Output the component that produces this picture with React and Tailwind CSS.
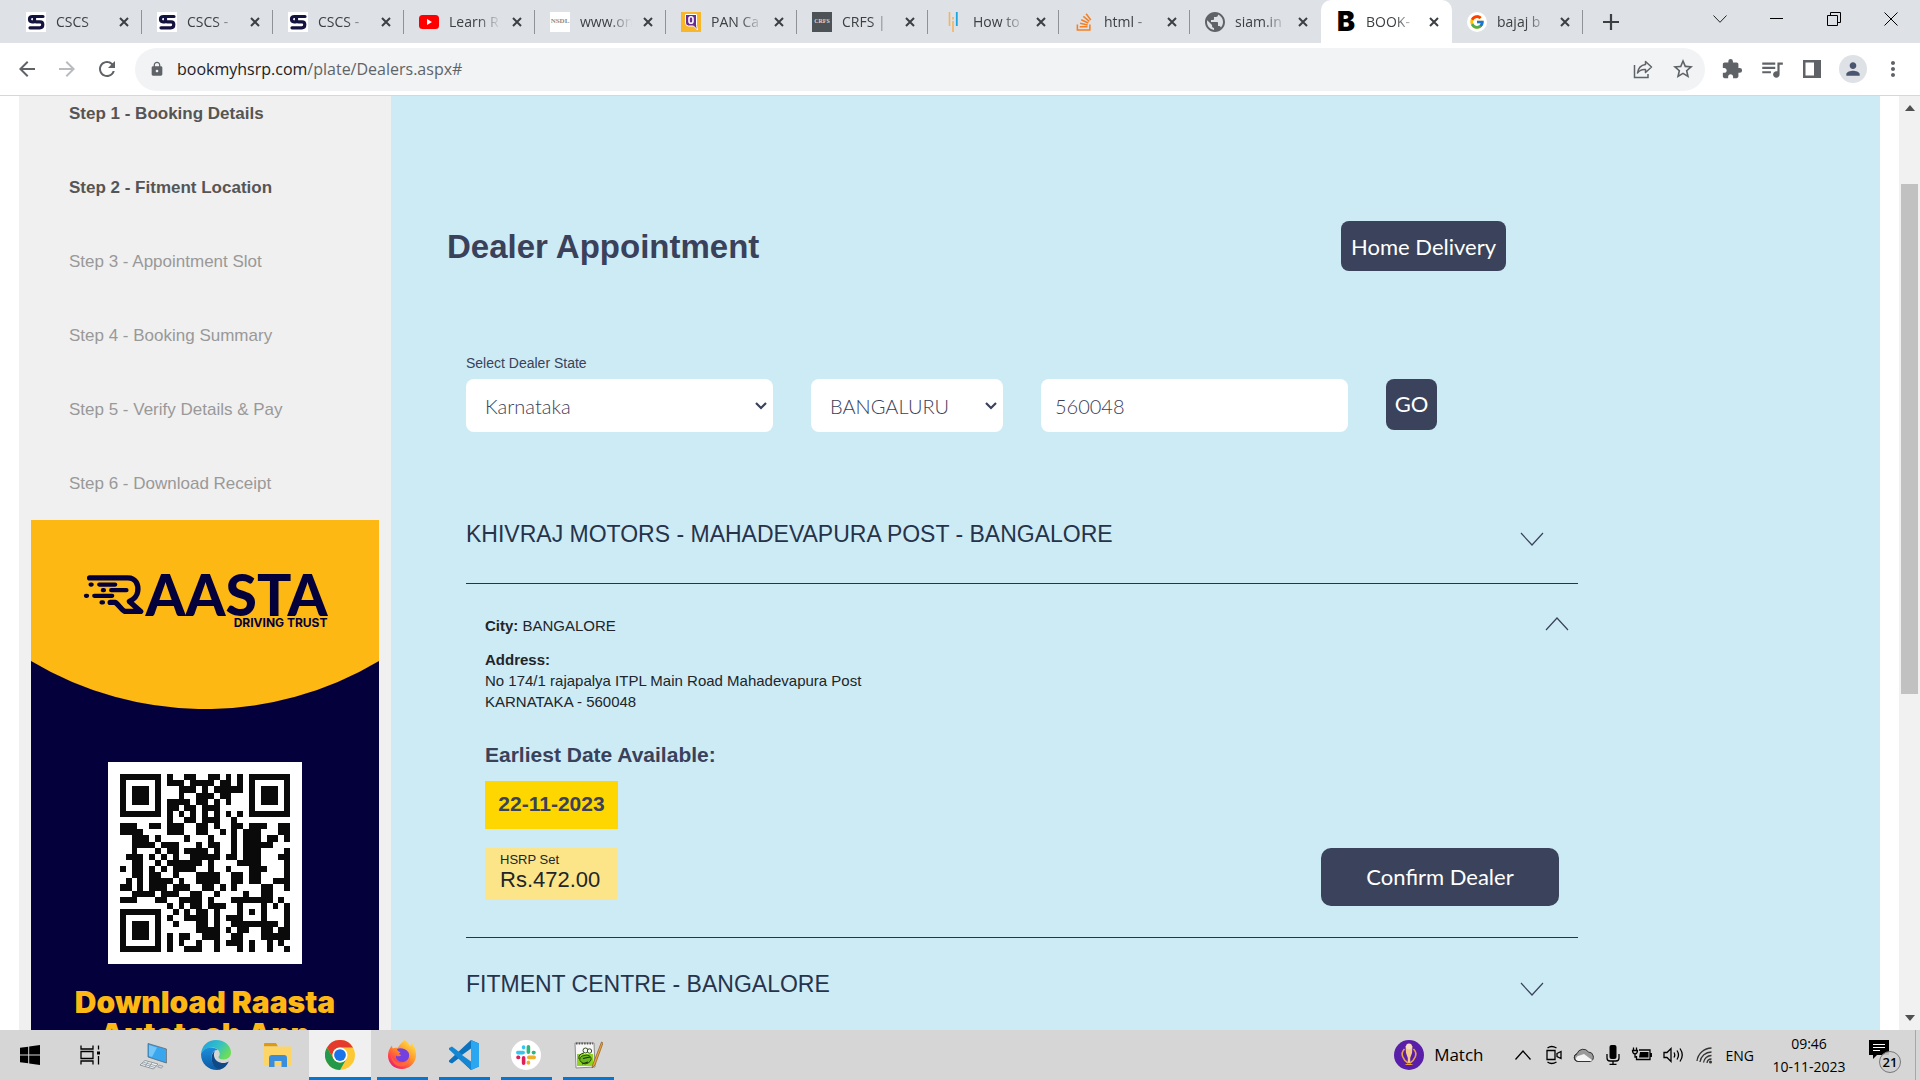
import React from "react";
import {
  MdArrowBack,
  MdArrowForward,
  MdRefresh,
  MdLock,
  MdStarBorder,
  MdExtension,
  MdQueueMusic,
  MdPerson,
  MdMoreVert,
  MdPublic,
} from "react-icons/md";
import { FcGoogle } from "react-icons/fc";
import { FaStackOverflow } from "react-icons/fa";

/* ---------- favicons ---------- */

const CscsIcon = () => (
  <svg viewBox="0 0 20 20" className="size-5">
    <rect width="20" height="20" fill="#fff" />
    <path
      d="M16.500 4.500H6.500Q3.500 4.500 3.500 7Q3.500 9.800 6 9.800H8M17 4.500H9.500Q8.500 4.500 8.500 6V8Q8.500 9.800 10.500 9.800H14Q16.800 9.800 16.800 12.500Q16.800 15.800 13.800 15.800H4"
      fill="none"
      stroke="#14123f"
      strokeWidth="3.200"
      strokeLinecap="round"
    />
  </svg>
);

const YoutubeIcon = () => (
  <svg viewBox="0 0 20 20" className="size-5">
    <rect y="3" width="20" height="14" rx="3.500" fill="#f00" />
    <path d="M8 7v6l5-3z" fill="#fff" />
  </svg>
);

const NsdlIcon = () => (
  <span className="flex size-5 items-center justify-center overflow-hidden bg-white font-['Liberation_Serif',serif] text-[7px] font-bold text-[#8a8a8a]">
    NSDL
  </span>
);

const QuintIcon = () => (
  <svg viewBox="0 0 20 20" className="size-5">
    <rect width="20" height="20" fill="#f8b62b" />
    <path d="M4.500 2.500h11v11l1 4.500-4-4h-5q-3 0-3-3z" fill="#6a2c91" stroke="#fff" strokeWidth="1" />
    <rect x="8" y="4.800" width="4" height="6.500" rx="2" fill="#6a2c91" stroke="#fff" strokeWidth="1.600" />
  </svg>
);

const CrfsIcon = () => (
  <span className="flex size-5 items-center justify-center overflow-hidden bg-[#4d5257] font-['Liberation_Serif',serif] text-[6px] font-bold text-[#d7d7d7]">
    CRFS
  </span>
);

const BarsIcon = () => (
  <svg viewBox="0 0 20 20" className="size-5">
    <path d="M6.500 0v14M10 9v11" stroke="#f5b35c" strokeWidth="1.600" />
    <path d="M10 5v2.500" stroke="#f5b35c" strokeWidth="1.600" />
    <path d="M13.800 0v14" stroke="#1ca6dc" strokeWidth="1.800" />
  </svg>
);

const BookIcon = () => (
  <span className="flex size-5 items-center justify-center font-['Inter',sans-serif] text-[27px] leading-5 font-black text-black">
    B
  </span>
);

const GoogleIcon = () => (
  <span className="flex size-5 items-center justify-center rounded-full bg-white">
    <FcGoogle className="size-4" />
  </span>
);

const CloseIcon = () => (
  <svg viewBox="0 0 16 16" className="size-4">
    <path d="M4 4l8 8M12 4l-8 8" stroke="#3c4043" strokeWidth="2" />
  </svg>
);

const TABS = [
  { title: "CSCS", icon: <CscsIcon /> },
  { title: "CSCS -", icon: <CscsIcon /> },
  { title: "CSCS -", icon: <CscsIcon /> },
  { title: "Learn R", icon: <YoutubeIcon /> },
  { title: "www.on", icon: <NsdlIcon /> },
  { title: "PAN Ca", icon: <QuintIcon /> },
  { title: "CRFS |", icon: <CrfsIcon /> },
  { title: "How to", icon: <BarsIcon /> },
  { title: "html -", icon: <FaStackOverflow className="size-5 text-[#f48024]" /> },
  { title: "siam.in", icon: <MdPublic className="size-6 -mx-0.5 text-[#5f6368]" />, beforeActive: true },
  { title: "BOOK-", icon: <BookIcon />, active: true },
  { title: "bajaj b", icon: <GoogleIcon /> },
];

function Tab({ tab }) {
  return (
    <div
      className={
        "flex w-[131px] min-w-0 items-center pr-2.5 pl-[15px] " +
        (tab.active ? "rounded-t-[10px] bg-white" : "")
      }
    >
      <span className="mr-2.5 flex size-5 shrink-0 items-center justify-center">{tab.icon}</span>
      <span className="mr-2 min-w-0 flex-1 overflow-hidden text-[14px] leading-5 whitespace-nowrap text-[#3c4043] [mask-image:linear-gradient(to_right,black_55%,transparent)]">
        {tab.title}
      </span>
      <button aria-label={"Close " + tab.title} className="shrink-0">
        <CloseIcon />
      </button>
      {!tab.active && !tab.beforeActive && (
        <span className="-mr-2.5 ml-[9px] h-6 w-px shrink-0 bg-[#8f9398]" />
      )}
    </div>
  );
}

function TabStrip() {
  return (
    <header className="flex h-[43px] shrink-0 bg-[#dee1e6] pr-px">
      <div className="flex min-w-0 pl-[11px]">
        {TABS.map((tab, i) => (
          <Tab key={i} tab={tab} />
        ))}
      </div>
      <button aria-label="New tab" className="px-5">
        <svg viewBox="0 0 16 16" className="size-4">
          <path d="M8 0v16M0 8h16" stroke="#3c4043" strokeWidth="2.200" />
        </svg>
      </button>
      <div className="mb-1.5 ml-auto flex">
        <button aria-label="Search tabs" className="flex w-[57px] items-center justify-center">
          <svg viewBox="0 0 14 8" className="h-2 w-3.5" fill="none" stroke="#222">
            <path d="M.5.5 7 7.300 13.500.5" />
          </svg>
        </button>
        <button aria-label="Minimize" className="flex w-[57px] items-center justify-center">
          <span className="h-px w-[13px] bg-black" />
        </button>
        <button aria-label="Restore" className="flex w-[57px] items-center justify-center">
          <svg viewBox="0 0 14 14" className="size-3.5" fill="none" stroke="#000">
            <path d="M.5 3.500h10v10H.5zM3.500 3V.5h10v10H11" />
          </svg>
        </button>
        <button aria-label="Close window" className="flex w-[57px] items-center justify-center">
          <svg viewBox="0 0 14 14" className="size-3.5" fill="none" stroke="#000">
            <path d="M.5.5l13 13M13.500.5l-13 13" />
          </svg>
        </button>
      </div>
    </header>
  );
}

function Toolbar() {
  return (
    <nav className="flex h-[53px] shrink-0 items-center border-b border-[#d5d7da] bg-white pr-[17px] text-[#5f6368]">
      <div className="flex w-[135px] shrink-0 items-center gap-4 pl-[15px]">
        <button aria-label="Back">
          <MdArrowBack className="size-6" />
        </button>
        <button aria-label="Forward" className="text-[#b9bbbe]">
          <MdArrowForward className="size-6" />
        </button>
        <button aria-label="Reload">
          <MdRefresh className="size-6" />
        </button>
      </div>
      <div className="flex h-[43px] min-w-0 flex-1 items-center rounded-full bg-[#f1f3f4] pr-2.5 pl-3.5">
        <MdLock className="size-4" />
        <p className="ml-3 flex-1 truncate text-[16px] leading-6">
          <span className="text-[#202124]">bookmyhsrp.com</span>
          <span>/plate/Dealers.aspx#</span>
        </p>
        <button aria-label="Share" className="mr-[18px]">
          <svg viewBox="0 0 20 20" className="size-5" fill="none" stroke="#5f6368" strokeWidth="1.500">
            <path d="M1.500 6v12.500H15V15" />
            <path d="M12.500 2.500 18.500 8l-6 5.500V10.500Q7.500 10 4.500 14Q5.500 6.500 12.500 5.500z" strokeLinejoin="round" />
          </svg>
        </button>
        <button aria-label="Bookmark">
          <MdStarBorder className="size-6" />
        </button>
      </div>
      <div className="ml-4 flex items-center gap-4">
        <button aria-label="Extensions">
          <MdExtension className="size-[22px]" />
        </button>
        <button aria-label="Media">
          <MdQueueMusic className="size-[26px]" />
        </button>
        <button aria-label="Side panel" className="px-0.5">
          <svg viewBox="0 0 18 18" className="size-[18px]">
            <path d="M0 0h18v18H0zM2.500 2.500v13h8.500v-13z" fill="#5f6368" fillRule="evenodd" />
          </svg>
        </button>
        <button aria-label="Profile" className="flex size-7 items-center justify-center rounded-full bg-[#dee1e6]">
          <MdPerson className="size-5 text-[#4a5670]" />
        </button>
        <button aria-label="Menu" className="flex w-5 justify-center">
          <MdMoreVert className="size-6 shrink-0" />
        </button>
      </div>
    </nav>
  );
}

/* ---------- sidebar ---------- */

const STEPS = [
  { label: "Step 1 - Booking Details", done: true },
  { label: "Step 2 - Fitment Location", done: true },
  { label: "Step 3 - Appointment Slot" },
  { label: "Step 4 - Booking Summary" },
  { label: "Step 5 - Verify Details & Pay" },
  { label: "Step 6 - Download Receipt" },
];

const QR = [
  "#######.#..##..##.#.#.#######",
  "#.....#.###.####.##.#.#.....#",
  "#.###.#...###.#.#####.#.###.#",
  "#.###.#...#..###.##...#.###.#",
  "#.###.#.####.##.#.#...#.###.#",
  "#.....#.##.##.###.....#.....#",
  "#######.#.#.#.#.#.#.#.#######",
  "........#..##.###..#.........",
  "###..##.###..##.#..##.###..##",
  "####....###..##..#.#.###...##",
  "..###.#....#...#...#.###.##.#",
  "..####.###...#.##..#.#####...",
  "..#...#.##.####.#..#.###....#",
  ".###.#.#.#..#####.##.###...##",
  "..##..#.######.#....####....#",
  "#.##.#.#.####..#..#...###...#",
  "..##.##..#...####..##.##....#",
  ".#.#.####.#..####..##.##..###",
  "##.#.###.###..##.#.#....##..#",
  "..####.###..##..#....#..##...",
  "###...##..####.#...#######.#.",
  "........#.#.##.###..#...#.#.#",
  "#######..#.#.##.#...#.#.#...#",
  "#.....#.#..####.#.###...#...#",
  "#.###.#..#...##.#..########.#",
  "#.###.#......####.#.##..##.##",
  "#.###.#.#.##..###..##...#####",
  "#.....#.#.#..#..#.###.#..#.#.",
  "#######.#..###..#...#.#..#..#",
];

const QrCode = () => (
  <svg
    viewBox="-2 -2 33 33"
    preserveAspectRatio="none"
    shapeRendering="crispEdges"
    className="h-[202px] w-[194px] bg-white"
    role="img"
    aria-label="QR code"
  >
    {QR.map((row, y) =>
      [...row].map((c, x) => (c === "#" ? <rect key={x + "-" + y} x={x} y={y} width="1" height="1" fill="#0a0a0a" /> : null))
    )}
  </svg>
);

const RaastaMark = () => (
  <svg viewBox="0 0 190 122" className="h-[41px] w-[63px]" fill="none" stroke="#04003c" strokeLinecap="round" strokeLinejoin="round">
    <path d="M20 11H135C160 11 168 32 165 52C163 68 152 76 140 82L174 112H126C114 106 108 92 98 85H82" strokeWidth="16" />
    <path d="M23 31h3M49 31h48M60 48h3M85 48h46M9 65h3M34 65h54M56 85h4" strokeWidth="13" />
  </svg>
);

function Promo() {
  return (
    <a href="#" className="mx-3 mt-auto block h-[510px] shrink-0 overflow-hidden bg-[#04003c] font-['Inter',sans-serif]">
      <div className="grid h-[242px]">
        <svg viewBox="0 0 348 189" preserveAspectRatio="none" className="h-[189px] w-full [grid-area:1/1]">
          <path d="M0 0H348V141A339 339 0 0 1 0 141Z" fill="#fdb813" />
        </svg>
        <div className="flex flex-col items-center pt-[53px] [grid-area:1/1]">
          <div className="flex flex-col text-[#04003c]">
            <div className="flex h-[42px] items-center">
              <RaastaMark />
              <span className="font-['Lato',sans-serif] text-[57px] leading-[42px] font-black">AASTA</span>
            </div>
            <span className="mt-0.5 text-right text-[12px] leading-3 font-bold">DRIVING TRUST</span>
          </div>
        </div>
      </div>
      <div className="flex justify-center">
        <QrCode />
      </div>
      <p className="mt-[22px] text-center text-[30px] leading-8 font-black text-[#fdb813]">
        Download Raasta
        <br />
        Autotech App
      </p>
    </a>
  );
}

function Sidebar() {
  return (
    <aside className="flex w-[372px] shrink-0 flex-col bg-[#f0f0f0]">
      <ol className="flex flex-col gap-[50px] pt-1.5 pl-[50px] text-[17px] leading-6">
        {STEPS.map((s) => (
          <li key={s.label} className={s.done ? "font-bold text-[#555]" : "text-[#999]"}>
            {s.label}
          </li>
        ))}
      </ol>
      <Promo />
    </aside>
  );
}

/* ---------- dealer page ---------- */

const Chevron = ({ up }) => (
  <svg viewBox="0 0 24 14" className="h-3.5 w-6" fill="none" stroke="#3a415a" strokeWidth="1.200">
    <path d={up ? "M1 13 12 1l11 12" : "M1 1l11 12L23 1"} />
  </svg>
);

function SelectBox({ id, label, options }) {
  return (
    <div className="relative">
      <select
        id={id}
        aria-label={label}
        className="h-[53px] w-full appearance-none rounded-lg bg-white pl-[19px] font-['Lato',sans-serif] text-[20px] font-light text-[#3a415a]"
      >
        {options.map((o) => (
          <option key={o}>{o}</option>
        ))}
      </select>
      <svg viewBox="0 0 12 8" className="pointer-events-none absolute top-[23px] right-1.5 h-2 w-3" fill="none" stroke="#3a415a" strokeWidth="2.200">
        <path d="M1 1l5 5 5-5" />
      </svg>
    </div>
  );
}

function DealerHeading({ children }) {
  return (
    <button className="flex h-[30px] w-full items-start justify-between pr-[34px] text-left text-[23px] leading-[30px] text-[#26334a]">
      <span>{children}</span>
      <span className="pt-[13px] leading-none">
        <Chevron />
      </span>
    </button>
  );
}

function DealerPage() {
  return (
    <main className="min-w-0 flex-1 overflow-hidden bg-[#cdebf5] pt-[125px]">
      <div className="flex items-center justify-between pr-[374px] pl-14">
        <h1 className="pt-0.5 text-[33px] leading-10 font-bold text-[#3a415a]">Dealer Appointment</h1>
        <button className="h-[50px] rounded-lg bg-[#3a435b] px-2.5 font-['Lato',sans-serif] text-[22px] text-white">
          Home Delivery
        </button>
      </div>

      <div className="pr-[302px] pl-[75px]">
        <form className="mt-[82px] pr-[141px]" onSubmit={(e) => e.preventDefault()}>
          <label htmlFor="state" className="mb-1.5 block text-[14px] leading-5 text-[#3a415a]">
            Select Dealer State
          </label>
          <div className="grid grid-cols-[8fr_5fr_8fr_51px] gap-[38px]">
            <SelectBox id="state" options={["Karnataka"]} />
            <SelectBox id="city" label="District" options={["BANGALURU"]} />
            <input
              type="text"
              aria-label="Pincode"
              defaultValue="560048"
              className="h-[53px] w-full min-w-0 rounded-lg bg-white px-3.5 font-['Lato',sans-serif] text-[20px] font-light text-[#3a415a]"
            />
            <button className="h-[51px] rounded-lg bg-[#3a435b] pb-0.5 font-['Lato',sans-serif] text-[22px] text-white">GO</button>
          </div>
        </form>

        <section className="mt-[87px] border-b border-[#26334a] pb-[34px]">
          <DealerHeading>KHIVRAJ MOTORS - MAHADEVAPURA POST - BANGALORE</DealerHeading>
        </section>

        <section className="border-b border-[#26334a] px-[19px] pt-[31px] pb-[31px] text-[15px] leading-[21px] text-[#212529]">
          <div className="flex justify-between">
            <p>
              <b>City:</b> BANGALORE
            </p>
            <button aria-label="Collapse" className="-mr-2.5 h-[21px] pb-1">
              <Chevron up />
            </button>
          </div>
          <p className="mt-[13px] font-bold">Address:</p>
          <p>No 174/1 rajapalya ITPL Main Road Mahadevapura Post</p>
          <p>KARNATAKA - 560048</p>
          <h2 className="mt-[29px] text-[21px] leading-7 font-bold text-[#3a415a]">Earliest Date Available:</h2>
          <div className="mt-3 flex h-12 w-[133px] items-center justify-center bg-[#ffd700] pb-1 text-[21px] font-bold text-[#3a415a]">
            22-11-2023
          </div>
          <div className="mt-[19px] flex items-start justify-between">
            <div className="flex h-[52px] w-[132px] flex-col bg-[#fce588] pt-1 pl-[15px]">
              <span className="text-[13px] leading-4">HSRP Set</span>
              <span className="text-[22px] leading-6">Rs.472.00</span>
            </div>
            <button className="h-[58px] w-[238px] rounded-[10px] bg-[#3a435b] pb-0.5 font-['Lato',sans-serif] text-[22px] text-white">
              Confirm Dealer
            </button>
          </div>
        </section>

        <section className="mt-[31px]">
          <DealerHeading>FITMENT CENTRE - BANGALORE</DealerHeading>
        </section>
      </div>
    </main>
  );
}

function Scrollbar() {
  return (
    <div className="flex w-[21px] shrink-0 flex-col items-center bg-[#f1f1f1]" aria-hidden="true">
      <svg viewBox="0 0 10 6" className="mt-[9px] h-1.5 w-2.5 shrink-0" fill="#505050">
        <path d="M0 6 5 0l5 6z" />
      </svg>
      <div className="mt-[73px] h-[510px] w-[17px] bg-[#c1c1c1]" />
      <svg viewBox="0 0 10 6" className="mt-auto mb-[9px] h-1.5 w-2.5 shrink-0" fill="#505050">
        <path d="M0 0l5 6 5-6z" />
      </svg>
    </div>
  );
}

/* ---------- taskbar ---------- */

const WindowsIcon = () => (
  <svg viewBox="0 0 20 20" className="size-5" fill="#000">
    <path d="M0 2.800 8.200 1.700V9.500H0zM9.200 1.500 20 0v9.500H9.200zM0 10.500h8.200v7.800L0 17.200zM9.200 10.500H20V20L9.200 18.500z" />
  </svg>
);

const TaskViewIcon = () => (
  <svg viewBox="0 0 20 20" className="size-5" fill="none" stroke="#000" strokeWidth="1.300">
    <path d="M1 .5v3.500h12V.5M1 6.500h12v7H1zM1 19.500V16h12v3.500M18.500.5v4M18.500 11v8.500" />
    <path d="M17 6.500h3v3h-3z" fill="#000" stroke="none" />
  </svg>
);

const PcIcon = () => (
  <svg viewBox="0 0 30 30" className="size-[30px]">
    <path d="M9 3.500 27 9v14L9 17z" fill="#3aa6ee" />
    <path d="M10 5 18 7.500l-5 9.500-3-1z" fill="#74c6f8" />
    <path d="M9 3.500 27.500 9v14L9 17z" fill="none" stroke="#4d5d6b" strokeWidth=".7" />
    <path d="M6 20.500 19 24l-4.500 5L1 25z" fill="#eef2f5" stroke="#7b858d" strokeWidth=".8" />
    <path d="M4.500 22.300 17.500 26M3 23.600 16 27.500M9.500 21.500 6 26.500M13 22.500 10 27.500" stroke="#8d979e" strokeWidth=".8" />
    <path d="M20 25l4 1.200-1.500 2-3.800-1.200z" fill="#cfd6db" stroke="#7b858d" strokeWidth=".6" />
  </svg>
);

const EdgeIcon = () => (
  <svg viewBox="0 0 30 30" className="size-[30px]">
    <defs>
      <linearGradient id="edgeTop" x1="0" y1="0" x2="1" y2=".5">
        <stop offset="0" stopColor="#1b9de2" />
        <stop offset=".6" stopColor="#35c1c4" />
        <stop offset="1" stopColor="#6bdc5b" />
      </linearGradient>
      <linearGradient id="edgeLow" x1="0" y1="0" x2="0" y2="1">
        <stop offset="0" stopColor="#1b8fdc" />
        <stop offset="1" stopColor="#0c59a4" />
      </linearGradient>
    </defs>
    <path d="M0 14C1 5 7 0 15 0c9 0 15 6 15 12.500 0 4-3 7-7.500 7-3.500 0-5-1.200-5-2.300 0-.8 1.200-1.200 1.200-3.400C18.700 10 15 7.500 11 7.500 6 7.500 1.500 10 0 14z" fill="url(#edgeTop)" />
    <path d="M0 14c1.500-4 5.500-6.500 10-6.500 3 0 5.500 1 7 2.700C13.500 9.500 10.500 13 10.500 17.500c0 6.500 4.500 11 9.500 12C10 31.500 0 26 0 14z" fill="url(#edgeLow)" />
    <path d="M10.500 18c0-3 1.200-5.600 3.500-7-1 1.500-1.200 3-1 5 .6 4.500 5 7 9.500 7 2 0 4-.7 5.300-1.500C26 25.500 23 28.500 19 29.600 14 28.500 10.500 24 10.500 18z" fill="#0f4a87" />
  </svg>
);

const FolderIcon = () => (
  <svg viewBox="0 0 28 24" className="h-6 w-7">
    <path d="M0 1q0-1 1-1h11l2 3.500H0z" fill="#dd9a10" />
    <path d="M0 3.500h26.500q1 0 1 1V22q0 1-1 1H1q-1 0-1-1z" fill="#fdd566" />
    <path d="M5 24v-9q0-3 3-3h12q3 0 3 3v9h-5.500v-6h-7v6z" fill="#3b8edb" />
  </svg>
);

const ChromeIcon = () => (
  <svg viewBox="0 0 48 48" className="size-[30px]">
    <circle cx="24" cy="24" r="24" fill="#fcc934" />
    <path d="M3.200 12A24 24 0 0 1 44.800 12H24A12 12 0 0 0 13.600 30z" fill="#e33b2e" />
    <path d="M3.200 12A24 24 0 0 0 24 48L34.400 30A12 12 0 0 1 13.600 30z" fill="#23994a" />
    <circle cx="24" cy="24" r="12" fill="#fff" />
    <circle cx="24" cy="24" r="9.400" fill="#1a73e8" />
  </svg>
);

const FirefoxIcon = () => (
  <svg viewBox="0 0 30 30" className="size-[30px]">
    <defs>
      <linearGradient id="fox" x1=".9" y1=".1" x2=".2" y2="1">
        <stop offset="0" stopColor="#ffe04a" />
        <stop offset=".45" stopColor="#ff9128" />
        <stop offset=".8" stopColor="#ff3d4d" />
        <stop offset="1" stopColor="#d91f7c" />
      </linearGradient>
    </defs>
    <path d="M17.500 0c3 1.500 4.500 3.600 5 6 2-1 2-2 2-3.500C27.500 6 29.500 11 29 16.500 28 24 22 29 15 29 7 29 1.500 23.500 1 16.500.8 12 2.500 8 5 5.500c0 1.300.2 2.300.8 3 1.200-.8 3-1 4.700-.4C12.500 5 15 2.500 17.500 0z" fill="url(#fox)" />
    <path d="M10 9c3-1.500 9-.5 11.500 3.500 2 4-.5 9.500-6 9.500-4.500 0-7-3-6.500-6.500 2 1.500 4 .8 5.500-.5-3-.5-2.500-1.800-1-3-2-.2-3-1.200-3.500-3z" fill="#7540e0" />
    <path d="M4 14c1 6 6 9.500 11 9 4.500-.5 7.500-3.500 8-7 1 5-3 10.500-9 10.500S4 21 4 14z" fill="#ff7139" fillOpacity=".7" />
  </svg>
);

const VsCodeIcon = () => (
  <svg viewBox="0 0 30 30" className="size-[30px]">
    <path d="M22 0l8 3.500v23L22 30 9.500 18.500 3 23.500 0 22V20.500L22 0z" fill="#0b72bd" />
    <path d="M0 8 3 6.500 22 21v9L0 9.500z" fill="#1487d4" />
    <path d="M22 0l8 3.500v23L22 30z" fill="#2aa7f0" />
    <path d="M22 8.500v13L13 15z" fill="#d6d6d6" />
    <path d="M0 12v6l3.500-3z" fill="#d6d6d6" />
  </svg>
);

const SlackIcon = () => (
  <svg viewBox="0 0 30 30" className="size-[30px]">
    <circle cx="15" cy="15" r="15" fill="#fff" />
    <g strokeWidth="3.600" strokeLinecap="round">
      <path d="M6.800 12.600h5.400M12.600 7v.6" stroke="#36c5f0" />
      <path d="M17.400 6.800v5.400M23 12.600h-.6" stroke="#2eb67d" />
      <path d="M23.200 17.400h-5.400M17.400 23v-.6" stroke="#ecb22e" />
      <path d="M12.600 23.200v-5.400M7 17.400h.6" stroke="#e01e5a" />
    </g>
  </svg>
);

const NotepadIcon = () => (
  <svg viewBox="0 0 30 30" className="size-[30px]">
    <path d="M2 3h19l1 24-19 1z" fill="#f7f7f7" stroke="#8c8c8c" />
    <path d="M3 3.500h17" stroke="#555" strokeWidth="2" strokeDasharray="1.500 1.200" />
    <path d="M4 14h16l1 12H4z" fill="#8fd321" />
    <path d="M6 19q-1-5 5-6" fill="none" stroke="#253d10" />
    <path d="M8 22q-3-3 1-6l5-1q5 1 4 5-2 4-6 4z" fill="#69b81f" stroke="#253d10" strokeWidth=".9" />
    <circle cx="12.500" cy="10.500" r="2.500" fill="#f4f8ee" stroke="#253d10" strokeWidth=".9" />
    <circle cx="16.500" cy="11" r="2.200" fill="#f4f8ee" stroke="#253d10" strokeWidth=".9" />
    <path d="M10 18.500l7-1.500M9 24l6-2" stroke="#1d2d10" strokeWidth="1.200" />
    <path d="M28.500 2 20 24l-1 4 3-3L30 3z" fill="#f0a63a" stroke="#8a5a1a" strokeWidth=".7" />
  </svg>
);

const APPS = [
  { name: "This PC", icon: <PcIcon /> },
  { name: "Microsoft Edge", icon: <EdgeIcon /> },
  { name: "File Explorer", icon: <FolderIcon /> },
  { name: "Google Chrome", icon: <ChromeIcon />, active: true },
  { name: "Firefox", icon: <FirefoxIcon />, open: true },
  { name: "Visual Studio Code", icon: <VsCodeIcon />, open: true },
  { name: "Slack", icon: <SlackIcon />, open: true },
  { name: "Notepad++", icon: <NotepadIcon />, open: true },
];

const TrophyIcon = () => (
  <svg viewBox="0 0 30 30" className="size-[30px]">
    <circle cx="15" cy="15" r="15" fill="#5a1fa8" />
    <path d="M11.500 6h7l-.5 7-1.800 5v5h-2.400v-5L12 13z" fill="#f3c98d" />
    <path d="M10.500 9c-5 5-1 11 3.500 14M19.500 9c5 5 1 11-3.500 14" fill="none" stroke="#e8a24c" strokeWidth="1.600" />
    <path d="M10.500 25q4.500-3 9 0z" fill="#f0a63a" />
    <circle cx="15" cy="6.500" r="3" fill="#f7dcc0" />
  </svg>
);

const TrayIcons = () => (
  <div className="flex items-center gap-2.5">
    <svg viewBox="0 0 20 20" className="size-5" fill="none" stroke="#000" strokeWidth="1.300">
      <path d="M4 5.500h8v9H4zM14 8.500l4-2v7l-4-2zM4.500 3q4-3 9 0M4.500 17q4 3 9 0" />
    </svg>
    <svg viewBox="0 0 22 20" className="h-5 w-[22px]">
      <path d="M5 16.500a4 4 0 0 1-1-7.800A6.500 6.500 0 0 1 15.500 7a5 5 0 0 1 2 9.500z" fill="#9a9a9a" stroke="#333" />
      <path d="M3 15q-.5-4 3.500-4.500L11 9l8 6-1 1.500H5z" fill="#f4f4f4" />
      <path d="M5 16.500a4 4 0 0 1-1-7.800M17.500 16.500H5" fill="none" stroke="#333" />
    </svg>
    <svg viewBox="0 0 16 20" className="h-5 w-4" fill="none" stroke="#000" strokeWidth="1.300">
      <rect x="4.500" y="0" width="7" height="14" rx="2" fill="#000" stroke="none" />
      <path d="M2 9v4q0 3 3 3h6q3 0 3-3V9M8 16v3.300M4.500 19.300h7" />
    </svg>
    <svg viewBox="0 0 22 20" className="h-5 w-[22px]" fill="none" stroke="#000" strokeWidth="1.300">
      <path d="M8 5h11v9.500H5.500V11M20.300 8v4" />
      <path d="M9 7h8.500v5.500H8z" fill="#000" stroke="none" />
      <path d="M2.500 2.500v3M5.500 2.500v3M1.500 5.500h5q0 3-2.500 3.500-2.500-.5-2.500-3.500zM4 9v3h2" />
    </svg>
    <svg viewBox="0 0 22 20" className="h-5 w-[22px]" fill="none" stroke="#000" strokeWidth="1.300">
      <path d="M1 7.500h3l4-4v13l-4-4H1z" />
      <path d="M11 7.500q1.500 2.500 0 5M14 5.500q3 4.500 0 9M17 3.500q4.500 6.500 0 13" />
    </svg>
    <svg viewBox="0 0 20 20" className="size-5" fill="none" stroke="#333" strokeWidth="1.300">
      <path d="M2 16A15 15 0 0 1 16.500 3M5 17A11.500 11.500 0 0 1 16.500 7M8.500 17.500A8 8 0 0 1 16.500 10.500M12 18A4.500 4.500 0 0 1 16.500 14" />
      <circle cx="15.500" cy="17" r="1.500" fill="#333" stroke="none" />
    </svg>
  </div>
);

function Taskbar() {
  return (
    <footer className="flex h-[50px] shrink-0 items-stretch bg-[#d6d6d6] text-black">
      <button aria-label="Start" className="flex w-[60px] items-center justify-center">
        <WindowsIcon />
      </button>
      <button aria-label="Task view" className="mr-[3px] flex w-[60px] items-center justify-center">
        <TaskViewIcon />
      </button>
      {APPS.map((app) => (
        <button
          key={app.name}
          aria-label={app.name}
          className={"flex w-[62px] flex-col items-center " + (app.active ? "bg-[#f0f0f0]" : "")}
        >
          <span className="flex h-[47px] items-center pt-[3px]">{app.icon}</span>
          {app.active && <span className="h-[3px] w-full bg-[#0078d7]" />}
          {app.open && <span className="h-[3px] w-[51px] bg-[#0078d7]" />}
        </button>
      ))}
      <div className="ml-auto flex items-center">
        <button className="flex items-center gap-2.5 text-[17px] leading-6">
          <TrophyIcon />
          Match
        </button>
        <button aria-label="Show hidden icons" className="mr-3 ml-[31px]">
          <svg viewBox="0 0 16 10" className="h-2.5 w-4" fill="none" stroke="#000" strokeWidth="1.300">
            <path d="M.5 9.500 8 1l7.500 8.500" />
          </svg>
        </button>
        <TrayIcons />
        <span className="ml-[11px] text-[14px]">ENG</span>
        <time className="ml-[15px] w-20 text-center text-[14px] leading-[23px]">
          09:46
          <br />
          10-11-2023
        </time>
        <button aria-label="21 notifications" className="relative ml-5 size-8">
          <svg viewBox="0 0 20 20" className="mb-2.5 size-5" fill="#000">
            <path d="M0 0h20v15H8l-4 4v-4H0z" />
            <path d="M4 4.500h12M4 7.500h12M4 10.500h7" stroke="#fff" strokeWidth="1.200" />
          </svg>
          <span className="absolute top-3 left-2.5 flex size-[22px] items-center justify-center rounded-full border border-[#777] bg-[#d0d0d0]/90 text-[13px] leading-none font-semibold">
            21
          </span>
        </button>
        <span className="mr-1 ml-3.5 h-full w-px bg-[#a8a8a8]" />
      </div>
    </footer>
  );
}

export default function App() {
  return (
    <div className="flex h-screen flex-col overflow-hidden bg-white font-['Open_Sans',sans-serif]">
      <TabStrip />
      <Toolbar />
      <div className="flex min-h-0 flex-1 font-['Liberation_Sans',Arial,sans-serif]">
        <div className="flex min-w-0 flex-1 px-[19px]">
          <Sidebar />
          <DealerPage />
        </div>
        <Scrollbar />
      </div>
      <Taskbar />
    </div>
  );
}
